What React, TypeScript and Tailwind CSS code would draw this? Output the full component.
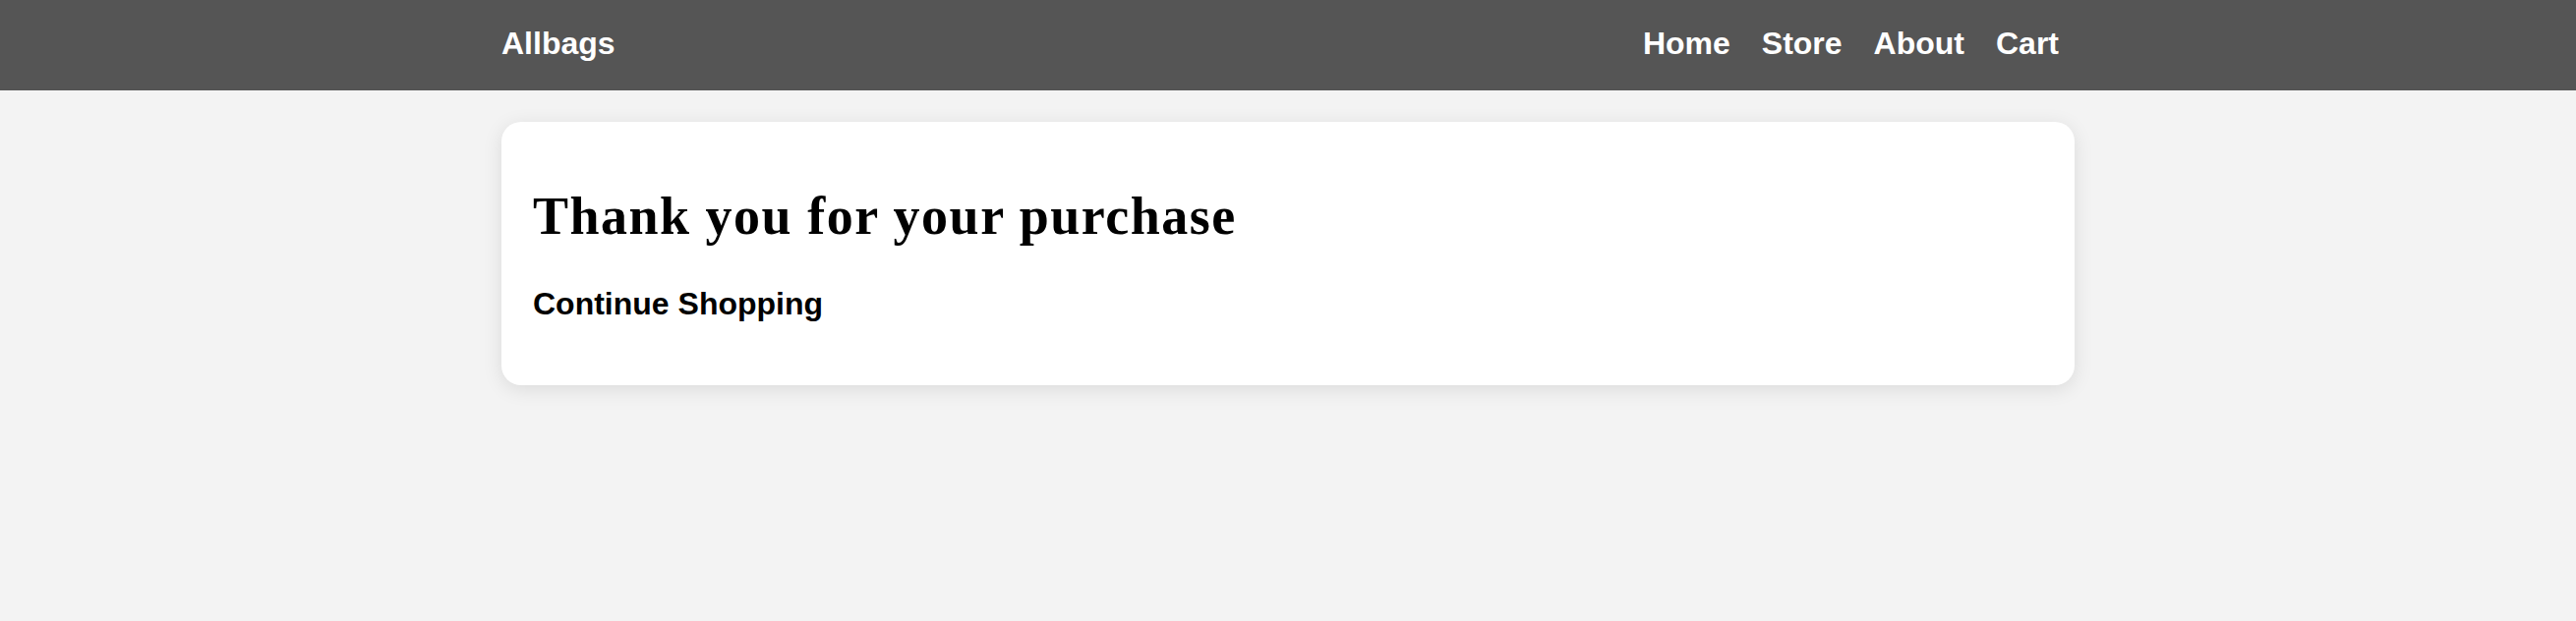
export default function App() {
  const links = ["Home", "Store", "About", "Cart"];

  return (
    <div className="min-h-screen bg-[#f3f3f3] font-['Liberation_Sans',Arial,sans-serif] text-black">
      {/* Barra superior */}
      <header className="h-[92px] bg-[#555555]">
        <div className="mx-auto flex h-full w-[1600px] items-center justify-between pb-1">
          <a href="#" className="text-[32px] leading-[1.2] font-bold text-white">
            Allbags
          </a>
          <nav className="flex">
            {links.map((l) => (
              <a key={l} href="#" className="px-4 text-[32px] leading-[1.2] font-bold text-white">
                {l}
              </a>
            ))}
          </nav>
        </div>
      </header>

      <main className="mx-auto mt-8 w-[1600px]">
        <section className="h-[268px] rounded-[20px] bg-white px-8 pt-16 shadow-[0_4px_20px_rgba(0,0,0,0.1)]">
          <h1 className="font-['Liberation_Serif','Times_New_Roman',serif] text-[54px] leading-[1.2] font-bold tracking-[1.5px]">
            Thank you for your purchase
          </h1>
          <a href="#" className="mt-[37px] block text-[32px] leading-[1.2] font-bold">
            Continue Shopping
          </a>
        </section>
      </main>
    </div>
  );
}
